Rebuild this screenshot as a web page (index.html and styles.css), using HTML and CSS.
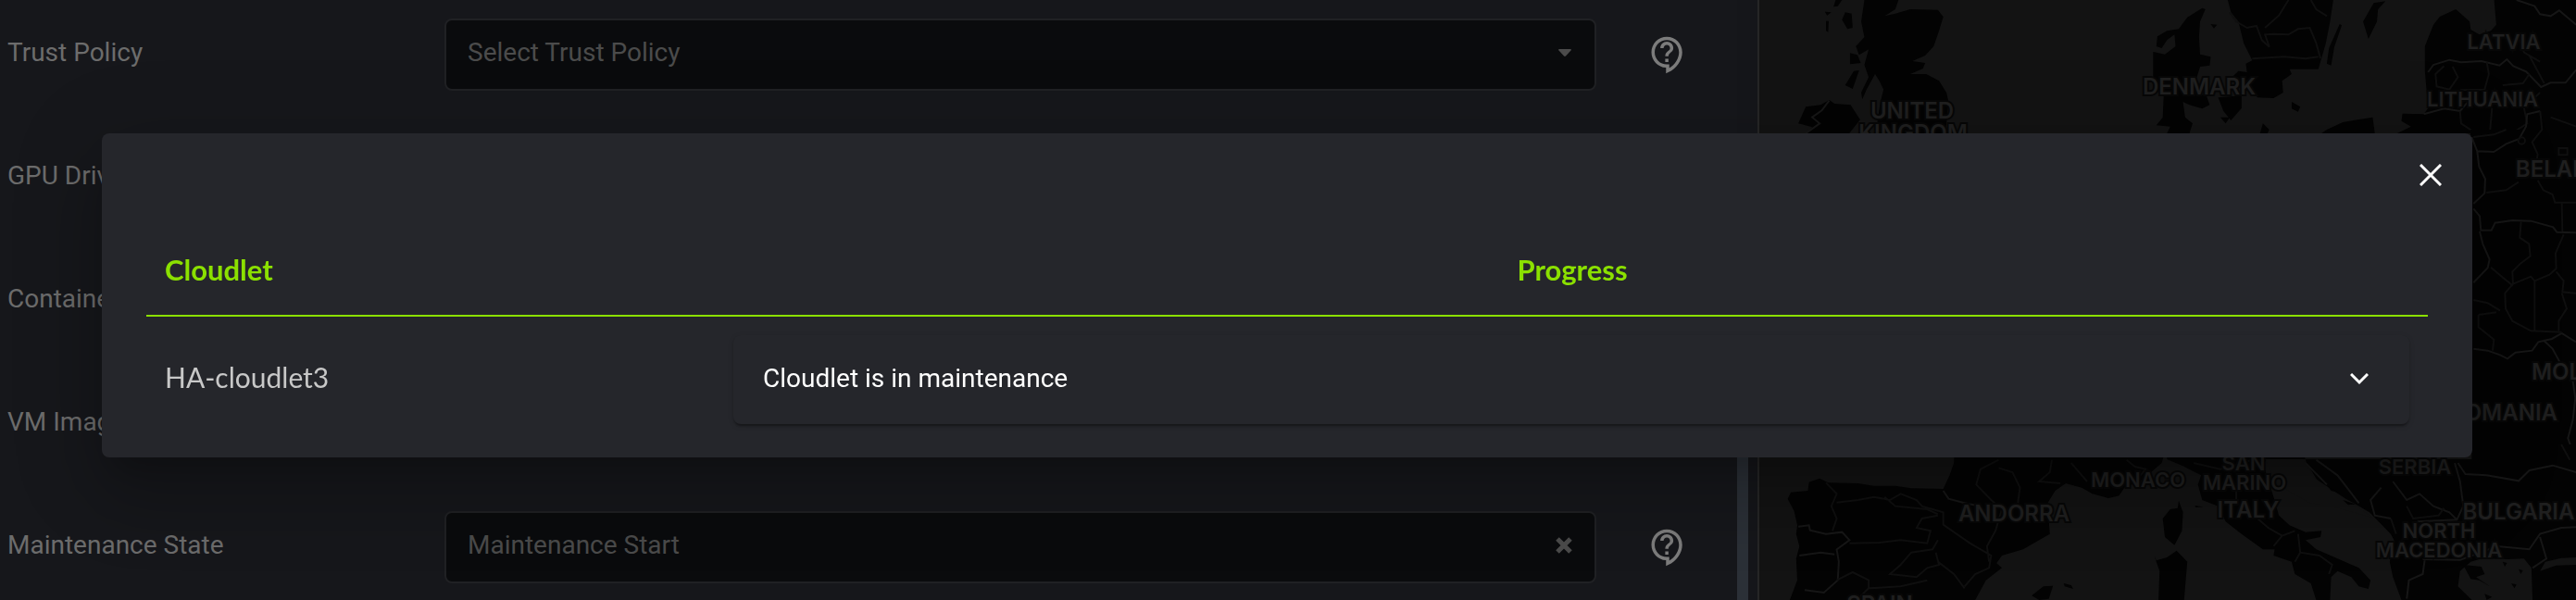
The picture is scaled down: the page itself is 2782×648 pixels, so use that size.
FILE: index.html
```html
<!DOCTYPE html>
<html lang="en">
<head>
<meta charset="utf-8">
<title>Cloudlet maintenance</title>
<link rel="stylesheet" href="styles.css">
</head>
<body>
<svg class="sprite" aria-hidden="true">
  <symbol id="help" viewBox="0 0 24 24"><path d="M11 23.59v-3.6c-5.01-.26-9-4.42-9-9.49C2 5.26 6.26 1 11.5 1S21 5.26 21 10.5c0 4.95-3.44 9.93-8.57 12.4l-1.43.69zM11.5 3C7.36 3 4 6.36 4 10.5S7.36 18 11.5 18H13v2.3c3.64-2.3 6-6.08 6-9.8C19 6.36 15.64 3 11.5 3zm-1 11.5h2v2h-2zm2-1.5h-2c0-3.25 3-3 3-5 0-1.1-.9-2-2-2s-2 .9-2 2h-2c0-2.21 1.79-4 4-4s4 1.79 4 4c0 2.5-3 2.75-3 5z"/></symbol>
</svg>
<main class="page">
  <form class="form">
    <div class="row">
      <label class="label" for="trust">Trust Policy</label>
      <div class="field">
        <select class="select" id="trust"><option>Select Trust Policy</option></select>
        <svg class="caret" viewBox="0 0 14 8"><path d="M1 0h12q1.500 .4.500 1.500L8 7.500q-1 .8-2 0L.5 1.500Q-.5.4 1 0z"/></svg>
      </div>
      <button class="help" type="button" aria-label="Trust policy help"><svg><use href="#help"/></svg></button>
    </div>
    <div class="row"><span class="label">GPU Driver</span></div>
    <div class="row"><span class="label">Container Version</span></div>
    <div class="row"><span class="label">VM Image Version</span></div>
    <div class="row">
      <label class="label" for="state">Maintenance State</label>
      <div class="field">
        <select class="select" id="state"><option>Maintenance Start</option></select>
        <button class="clear" type="button" aria-label="Clear"><svg viewBox="0 0 18 18"><path d="M2 2l14 14M16 2L2 16"/></svg></button>
      </div>
      <button class="help" type="button" aria-label="Maintenance state help"><svg><use href="#help"/></svg></button>
    </div>
  </form>
  <div class="scroll"><div class="thumb"></div></div>
  <svg class="map" viewBox="0 0 882 648" preserveAspectRatio="xMinYMin slice" role="img" aria-label="Map of Europe">
    <!-- northern part -->
    <g transform="translate(-20 0) scale(.5754 .3333)">
      <g class="land">
        <path d="M232 0H296L290 30 270 52 290 44 318 30 370 32 380 55 372 100 362 150 346 180 322 198 346 204 342 222 318 240 348 240 372 262 386 300 390 330 382 470H250L262 330 268 290 260 262 252 240 236 290 228 322 226 300 240 250 232 210 240 160 222 178 216 150 232 120 226 70z"/>
        <path d="M178 0h12l-8 20-8 2zM158 38l12 2-8 10zM196 40l12 4 2 46-10 4-10-30zM160 68l5 0-1 36-4-4zM205 172l14 6 6 26-20 4zM212 230l10-2-12 60-14-12z"/>
        <path d="M122 346L150 340 166 324 176 336 206 340 224 388 200 440 120 440 134 412 108 400z"/>
        <path d="M866 26L872 30 862 70 860 120 862 176 882 184 880 212 862 216 856 250 848 300 874 310 880 340 866 352 842 340 830 330 834 380 848 400 842 432H800L806 410 780 406 792 380 794 300 774 250 774 168 796 176 816 150 814 112 800 130 790 156 780 150 782 118 800 100 822 94 838 56z"/>
        <path d="M914 0H1112L1106 70 1098 140 1084 224 1030 224 1034 240 1016 262 1018 300 1000 318 970 316 960 300 944 270 922 250 934 230 950 234 948 206 960 196 944 140 934 70 920 40z"/>
        <path d="M896 316l44-6 0 40-20 40-14-30zM882 78l12 2-6 12zM900 380l18 0-8 20zM980 400l12 20-4 14h-14zM1034 330l16 16-4 16-12-10z"/>
        <path d="M1188 10L1210 4 1196 30 1194 70 1178 126 1168 70zM1124 78l4 4-14 70-6 60-8-6 4-50z"/>
        <path d="M1300 80L1312 54 1342 30 1368 70 1370 96 1386 112 1408 100 1418 80 1414 0H1568V480H1372V432H1232L1258 410 1240 392 1242 368 1282 370 1290 350 1284 230 1284 150z"/>
        <path d="M1100 420L1130 396 1186 380 1190 432H1090z"/>
      </g>
      <g class="border">
        <path class="strong" d="M1290 234L1300 210 1330 194 1352 202 1390 198 1424 212 1438 192 1450 214 1474 232 1502 282 1520 268 1548 268 1568 226M1282 370L1320 352 1350 360 1364 332 1400 340M1456 0L1490 20 1500 46 1520 52 1536 34 1568 80M122 432L148 400 134 380 152 358 166 326"/>
        <path d="M918 40L930 70 950 90 968 84 978 130 992 152 984 112 1000 110 1028 112 1046 94 1068 90 1080 140 1088 190M1070 0L1080 30 1100 52M1028 0L1010 50 984 90M960 190L1020 184 1060 190 1084 184M1320 214L1304 240 1306 280 1330 290 1346 250 1336 216M1400 200L1404 240 1396 290 1350 292M1480 240L1468 270 1430 276M1480 180L1508 270M1350 360L1352 400 1380 432M1410 350L1406 430M1500 300L1470 350 1476 400 1440 440 1440 480M1520 380L1568 410M1500 200L1470 170 1460 120"/>
      </g>
    </g>
    <!-- eastern strip beside the dialog -->
    <rect class="land" x="768" y="140" width="116" height="350"/>
    <g class="border" transform="translate(600 120) scale(.3333)">
      <path class="strong" d="M508 84L526 130 580 132 620 106 662 90 684 50 688 10 730 0M526 130L532 180 552 220 550 266 514 300M514 316L534 340 538 386 572 386 584 362 640 354 700 356 772 376 784 392 846 394M534 390L544 430 566 480 560 508 514 556M514 770L560 776 600 790 624 802 650 782 704 776 724 748 768 738 800 720 846 748M740 742L770 770 796 818M836 876L844 930 836 1000 820 1060 834 1100 826 1140M470 1130L496 1156 480 1184 560 1184 680 1192 720 1160 780 1152 846 1170"/>
      <path d="M514 84L580 76 620 60M730 0L736 60 704 100 722 140 716 180M556 264L620 256 660 230M722 224L740 256 770 270 778 296 846 296M800 296L802 390M668 358L664 410 694 430 698 470 666 494 640 520 642 560 700 536 712 550 712 710M806 400L780 460 782 510 760 530 712 550M782 520L806 550 802 586 846 590M570 506L610 540 642 566M642 560L616 590 618 640 640 680 700 712 800 716M514 612L560 622 600 646M530 660L588 652M530 660L530 700 580 740 576 776M800 590L816 640 790 680 790 712M790 120h28v22h-28z"/>
      <circle cx="670" cy="96" r="11"/>
    </g>
    <!-- southern part -->
    <g transform="translate(-20 480) scale(.5754 .3333)">
      <g class="land">
        <path d="M402 0H800L790 60 770 90 760 110 720 140 710 166 690 174 660 160 640 140 610 126 590 150 576 190 580 290 560 310 530 340 490 360 480 385 490 400 460 440 440 504H92L106 440 104 370 110 330 104 290 106 262 100 215 94 196 88 176 94 155 126 150 128 122 148 110 164 124 220 126 250 134 290 134 320 142 380 144 392 100 400 60z"/>
        <path d="M822 182L830 220 828 280 814 326 796 300 792 240 806 210 820 206zM818 344L838 380 832 504H784L786 410 776 360 780 376 800 366zM606 450l14 6 4 12-16-8zM546 490L568 460 586 458 578 500 560 504z"/>
        <path d="M800 0H1050L1062 60 1080 110 1100 150 1140 180 1180 220 1220 290 1226 310 1218 380 1224 430 1240 504H1568V0H1372V48H1100L990 48 980 60 1000 170 1010 230 1030 262 1060 284 1090 280 1088 300 1060 310 1080 340 1120 370 1160 400 1182 440 1178 468 1160 460 1146 430 1120 410 1108 430 1106 504H1080L1070 450 1040 420 1034 380 1000 360 1002 340 980 340 940 290 910 250 896 200 866 180 858 130 864 100 830 70 800 48z"/>
      </g>
      <path class="sea" d="M1350 410L1370 380 1390 370 1440 372 1470 370 1484 400 1486 504H1372L1346 460zM1568 390L1530 392 1500 410 1510 380 1540 368 1568 366zM984 48h72l20 60 70 80 40 50-60-30-60-20-60-60z"/>
      <path class="land" d="M1356 390L1390 396 1396 420 1380 430 1406 460 1386 440 1370 436zM1430 380l8 4-4 12zM1460 404l8 4-4 12zM1446 450l10 4-4 12zM1396 484l14 10-10 10zM1102 136l20 20-14-6zM1130 180l24 14-14 2zM852 198l16 4-14 2z"/>
      <g class="border">
        <path class="strong" d="M108 266L128 262 130 278 160 290 190 284 204 310 180 340 184 380 182 440 156 480 120 472M110 360L150 350 176 356M380 150L390 176 420 190 450 200M1346 60L1360 96 1400 100 1460 118 1480 84 1524 68 1568 90M1080 50L1120 100 1160 190M1060 60L1100 130M1202 140L1182 180 1190 230 1220 240M1224 120L1250 180 1274 160 1300 200 1330 220 1344 244M1340 60L1350 120 1356 200 1344 244 1270 250M1284 370L1280 420 1254 440 1250 500M1280 372L1350 374 1420 330 1480 340 1500 290 1540 270 1568 268M1500 300L1512 370 1486 400"/>
        <path d="M160 124L180 160 170 200 180 240 172 280M180 188L220 180 250 170 280 180 300 160 330 180 340 200 380 220 380 260 400 284 430 320 470 360 466 400 440 420 420 460M204 320L260 318 300 310 350 320 356 280 330 270 340 240 370 230M484 50L450 80 442 130 470 180 490 210 478 280 462 330 466 380M484 76L510 90 524 140 520 190M584 50L580 90 560 120 600 126M370 310L360 340 320 350 300 390 280 420 330 430 350 400 372 390 366 350M370 380L400 420 420 466M180 440L210 414 240 440 240 466 300 460 350 440M240 466L220 500M270 170L290 200 350 210 370 226M724 50L740 72 760 80 750 100M970 240L990 270 1016 296 1040 280M1016 296L1000 330M1046 290L1050 350 1086 360 1110 390 1104 420M1050 350L1040 380M1250 200L1262 240 1310 230 1320 206M1220 240L1230 290M1300 376L1300 350M930 140L930 180M850 60L900 80 960 50M1540 0L1556 50M620 60L650 120"/>
      </g>
    </g>
    <g class="names">
      <text x="165" y="128">UNITED</text><text x="166" y="152">KINGDOM</text>
      <text x="475" y="102">DENMARK</text><text class="small" x="804" y="53">LATVIA</text><text class="small" x="781" y="115">LITHUANIA</text>
      <text x="872" y="191">BELARUS</text><text x="895" y="410">MOLDOVA</text><text x="804" y="454">ROMANIA</text>
      <text class="small" x="708" y="512">SERBIA</text><text class="small" x="409" y="526">MONACO</text><text class="small" x="523" y="508">SAN</text><text class="small" x="524" y="529">MARINO</text>
      <text x="528" y="559">ITALY</text><text x="275" y="563">ANDORRA</text><text x="820" y="561">BULGARIA</text>
      <text class="small" x="734" y="581">NORTH</text><text class="small" x="734" y="602">MACEDONIA</text><text x="130" y="661">SPAIN</text>
    </g>
  </svg>
</main>
<div class="overlay">
  <section class="dialog" role="dialog" aria-label="Cloudlet progress">
    <button class="close" type="button" aria-label="Close"><svg viewBox="0 0 24 24"><path d="M1 1l22 22M23 1L1 23"/></svg></button>
    <table class="table">
      <thead><tr><th class="name">Cloudlet</th><th class="progress">Progress</th></tr></thead>
      <tbody><tr>
        <td class="name">HA-cloudlet3</td>
        <td class="cell"><button class="accordion" type="button" aria-expanded="false"><span>Cloudlet is in maintenance</span><svg viewBox="0 0 20 13"><path d="M1 1l9 9 9-9"/></svg></button></td>
      </tr></tbody>
    </table>
  </section>
</div>
</body>
</html>
```
FILE: styles.css
```css
* { box-sizing: border-box; }
body {
  margin: 0;
  overflow: hidden;
  background: #16171b;
  color: #6c6c6c;
  font: 28px/32px Roboto, "Liberation Sans", sans-serif;
}
button { padding: 0; border: 0; background: none; font: inherit; color: inherit; }
.sprite { display: none; }
.page {
  display: grid;
  grid-template-columns: minmax(0, 1876fr) 24px minmax(0, 882fr);
  grid-template-rows: minmax(0, 1fr);
  height: 100vh;
  overflow: hidden;
}
.form { padding: 20px 0 0 8px; overflow: hidden; }
.row {
  display: grid;
  grid-template-columns: 472px minmax(0, 1fr) 152px;
  height: 133px;
  align-items: start;
}
.label { padding: 21px 0; }
.field {
  display: flex;
  align-items: center;
  height: 78px;
  padding-right: 24px;
  border: 2px solid #202124;
  border-radius: 8px;
  background: #0a0b0d;
}
.select {
  flex: 1;
  height: 70px;
  padding: 0 0 4px 23px;
  border: 0;
  background: none;
  color: #4b4b4b;
  font: inherit;
  appearance: none;
}
.caret { width: 14px; height: 8px; margin: 0 1px 4px 0; fill: #4b4b4b; }
.clear { width: 18px; height: 18px; margin-bottom: 4px; }
.clear svg { display: block; width: 18px; height: 18px; stroke: #4b4b4b; stroke-width: 5; }
.help { width: 42px; height: 42px; margin: 18px 0 0 56px; }
.help svg { display: block; width: 42px; height: 42px; fill: #7c7c7c; }
.scroll {
  display: flex;
  align-items: flex-end;
  border-right: 2px solid #262626;
  background: #15161a;
}
.thumb { width: 12px; height: 45%; background: #2b3037; }
.map { display: block; width: 100%; height: 100%; background: #131313; }
.land { fill: #030303; }
.sea { fill: #131313; }
.border path, .border circle { fill: none; stroke: #0f0f0f; stroke-width: 2px; vector-effect: non-scaling-stroke; }
.border .strong { stroke: #161616; }
.names {
  fill: #1f1f1f;
  stroke: #070707;
  stroke-width: 4px;
  paint-order: stroke;
  font: 600 24px Inter, "Open Sans", sans-serif;
  text-anchor: middle;
}
.names .small { font-size: 22px; }
.overlay { position: fixed; inset: 0; padding: 144px 112px 0 110px; }
.dialog {
  display: flex;
  flex-direction: column;
  padding: 28px 48px 36px;
  border-radius: 8px;
  background: #25262b;
  box-shadow: 0 22px 30px -14px rgba(0,0,0,.2), 0 48px 76px 6px rgba(0,0,0,.14), 0 18px 92px 16px rgba(0,0,0,.12);
}
.close { align-self: flex-end; width: 34px; height: 34px; margin-right: -20px; }
.close svg { display: block; width: 24px; height: 24px; margin: 5px; fill: none; stroke: #fff; stroke-width: 3; }
.table { width: 100%; margin-top: 36px; border-spacing: 0; font-family: Lato, sans-serif; }
.table th {
  height: 100px;
  border-bottom: 2px solid #8be000;
  color: #8be000;
  font-size: 31px;
  font-weight: 700;
}
.table .name { width: 25%; padding: 0 0 0 20px; text-align: left; }
.table td.name { padding-top: 14px; color: #c8c8c8; font-size: 30px; }
.table .progress { padding: 0; text-align: center; }
.cell { padding: 20px 20px 0 18px; }
.accordion {
  display: flex;
  align-items: center;
  justify-content: space-between;
  width: 100%;
  height: 96px;
  padding: 0 44px 2px 32px;
  border-radius: 8px;
  box-shadow: 0 4px 2px -2px rgba(0,0,0,.2), 0 2px 2px rgba(0,0,0,.14), 0 2px 6px rgba(0,0,0,.12);
  background: #25262b;
  color: #fff;
  font-family: Roboto, sans-serif;
}
.accordion svg { width: 20px; height: 13px; fill: none; stroke: #fff; stroke-width: 3; }
```
